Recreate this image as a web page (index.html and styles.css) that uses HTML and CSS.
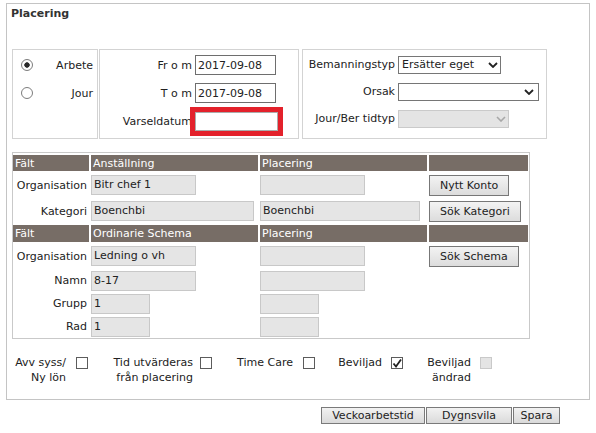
FILE: index.html
```html
<!DOCTYPE html>
<html lang="sv">
<head>
<meta charset="utf-8">
<title>Placering</title>
<link rel="stylesheet" href="styles.css">
</head>
<body>
<div class="panel">
  <div class="title">Placering</div>
  <div class="top-row">
    <div class="box box-type">
      <div class="radio-row"><span class="radio checked"></span><span class="lbl">Arbete</span></div>
      <div class="radio-row"><span class="radio"></span><span class="lbl">Jour</span></div>
    </div>
    <div class="box box-dates">
      <span class="lbl">Fr o m</span><input class="date" type="text" value="2017-09-08" readonly>
      <span class="lbl">T o m</span><input class="date" type="text" value="2017-09-08" readonly>
      <span class="lbl">Varseldatum</span><span class="highlight"><input class="date date-blank" type="text" value="" readonly></span>
    </div>
    <div class="box box-sel">
      <span class="lbl">Bemanningstyp</span>
      <div class="select sel-bem"><span>Ersätter eget</span><svg class="chev" width="10" height="6" viewBox="0 0 10 6"><polyline points="1,1 5,5 9,1" fill="none" stroke="#222" stroke-width="1.8"/></svg></div>
      <span class="lbl">Orsak</span>
      <div class="select sel-ors"><span></span><svg class="chev" width="10" height="6" viewBox="0 0 10 6"><polyline points="1,1 5,5 9,1" fill="none" stroke="#222" stroke-width="1.8"/></svg></div>
      <span class="lbl">Jour/Ber tidtyp</span>
      <div class="select sel-jour disabled"><span></span><svg class="chev" width="10" height="6" viewBox="0 0 10 6"><polyline points="1,1 5,5 9,1" fill="none" stroke="#a8a8a8" stroke-width="1.6"/></svg></div>
    </div>
  </div>

  <div class="fields">
    <div class="th">Fält</div><div class="th">Anställning</div><div class="th">Placering</div><div class="th"></div>

    <div class="fl">Organisation</div>
    <div class="fc"><span class="ro w-md">Bitr chef 1</span></div>
    <div class="fc"><span class="ro w-md"></span></div>
    <div class="fc"><button class="btn" type="button">Nytt Konto</button></div>

    <div class="fl">Kategori</div>
    <div class="fc"><span class="ro w-lg">Boenchbi</span></div>
    <div class="fc"><span class="ro w-lg2">Boenchbi</span></div>
    <div class="fc"><button class="btn" type="button">Sök Kategori</button></div>

    <div class="th">Fält</div><div class="th">Ordinarie Schema</div><div class="th">Placering</div><div class="th"></div>

    <div class="fl">Organisation</div>
    <div class="fc"><span class="ro w-md">Ledning o vh</span></div>
    <div class="fc"><span class="ro w-md"></span></div>
    <div class="fc"><button class="btn" type="button">Sök Schema</button></div>

    <div class="fl">Namn</div>
    <div class="fc"><span class="ro w-md">8-17</span></div>
    <div class="fc"><span class="ro w-md"></span></div>
    <div class="fc"></div>

    <div class="fl">Grupp</div>
    <div class="fc"><span class="ro w-sm">1</span></div>
    <div class="fc"><span class="ro w-sm"></span></div>
    <div class="fc"></div>

    <div class="fl">Rad</div>
    <div class="fc"><span class="ro w-sm">1</span></div>
    <div class="fc"><span class="ro w-sm"></span></div>
    <div class="fc"></div>
  </div>

  <div class="checks">
    <div class="ck ck1"><span class="ck-lbl">Avv syss/<br>Ny lön</span><span class="cb"></span></div>
    <div class="ck ck2"><span class="ck-lbl">Tid utvärderas<br>från placering</span><span class="cb"></span></div>
    <div class="ck ck3"><span class="ck-lbl">Time Care</span><span class="cb"></span></div>
    <div class="ck ck4"><span class="ck-lbl">Beviljad</span><span class="cb checked"><svg width="10" height="10" viewBox="0 0 10 10"><polyline points="1.5,5.5 4,8.5 9,1.5" fill="none" stroke="#222" stroke-width="1.8"/></svg></span></div>
    <div class="ck ck5"><span class="ck-lbl">Beviljad<br>ändrad</span><span class="cb disabled"></span></div>
  </div>
</div>

<div class="actions">
  <button class="abtn a-vecko" type="button">Veckoarbetstid</button>
  <button class="abtn a-dygn" type="button">Dygnsvila</button>
  <button class="abtn a-spara" type="button">Spara</button>
</div>
</body>
</html>
```

FILE: styles.css
```css
* { box-sizing: border-box; }

body {
  margin: 0;
  background: #fff;
  color: #222;
  font-family: "DejaVu Sans", Verdana, sans-serif;
  font-size: 11px;
}

.panel {
  margin: 3px 0 0 6px;
  width: 584px;
  height: 397px;
  border: 1px solid #c4c4c4;
}

.title {
  font-weight: bold;
  line-height: 13px;
  padding: 3px 0 0 4px;
  color: #333;
}

/* top row of boxes */
.top-row {
  display: flex;
  margin: 29px 0 0 5px;
}

.box {
  border: 1px solid #d3d3d3;
  height: 90px;
  padding-top: 1px;
}

.lbl { text-align: right; white-space: nowrap; }

.box-type {
  width: 86px;
  display: grid;
  grid-auto-rows: 28px;
  align-content: start;
}

.radio-row {
  display: flex;
  align-items: center;
  justify-content: space-between;
  padding: 0 4px 0 8px;
}

.radio {
  width: 12px;
  height: 12px;
  border: 1px solid #7d7d7d;
  border-radius: 50%;
  background: #fff;
}

.radio.checked {
  background: radial-gradient(circle, #2a2a2a 0 2.4px, #fff 3px);
}

.box-dates {
  width: 200px;
  margin-left: 1px;
  display: grid;
  grid-template-columns: 92px 81px;
  column-gap: 3px;
  grid-auto-rows: 28px;
  align-items: center;
  align-content: start;
}

.date {
  width: 81px;
  height: 20px;
  margin: 0;
  padding: 0 0 0 2px;
  border: 1px solid #6e6e6e;
  background: #fff;
  color: #222;
  font: inherit;
  outline: none;
}

.highlight {
  justify-self: start;
  display: inline-flex;
  margin-left: -5px;
  border: 5px solid #e3212b;
}

.date-blank {
  width: 83px;
  height: 19px;
  border-color: #ababab;
}

.box-sel {
  width: 245px;
  margin-left: 3px;
  display: grid;
  grid-template-columns: 92px auto;
  column-gap: 3px;
  grid-auto-rows: 27px;
  align-items: center;
  align-content: start;
  justify-items: start;
}

.box-sel .lbl { justify-self: end; }

.select {
  display: flex;
  align-items: center;
  justify-content: space-between;
  height: 18px;
  border: 1px solid #767676;
  background: #fff;
  padding: 0 2px 0 3px;
  white-space: nowrap;
}

.sel-bem { width: 103px; }
.sel-ors { width: 141px; padding-right: 4px; }
.sel-jour { width: 111px; }

.select.disabled {
  background: #e4e4e4;
  border-color: #cacaca;
}

.chev { flex: none; }

/* fields table */
.fields {
  margin: 13px 0 0 5px;
  width: 518px;
  border: 1px solid #c9c9c9;
  padding: 2px 1px 1px 0;
  display: grid;
  grid-template-columns: 76px 167px 167px 99px;
  grid-template-rows: 16px 24px 24px 17px 24px 21px 21px 21px;
  column-gap: 2px;
  row-gap: 2px;
}

.th {
  background: #776d66;
  color: #fff;
  padding-left: 2px;
  display: flex;
  align-items: center;
  white-space: nowrap;
}

.fl {
  display: flex;
  align-items: center;
  justify-content: flex-end;
  padding-right: 2px;
  white-space: nowrap;
}

.fc {
  display: flex;
  align-items: center;
}

.ro {
  display: block;
  height: 20px;
  line-height: 18px;
  background: #e5e5e5;
  border: 1px solid #c8c8c8;
  padding-left: 2px;
  white-space: nowrap;
  overflow: hidden;
}

.w-md { width: 105px; }
.w-lg { width: 163px; }
.w-lg2 { width: 160px; }
.w-sm { width: 59px; }

.btn {
  height: 21px;
  margin: 0;
  padding: 0 10px;
  font: inherit;
  color: #222;
  border: 1px solid #777;
  border-radius: 0;
  background: linear-gradient(#f3f3f3, #dcdcdc);
  white-space: nowrap;
}

/* checkbox row */
.checks {
  display: flex;
  margin: 16px 0 0 6px;
  line-height: 15px;
}

.ck {
  display: flex;
  align-items: flex-start;
  margin-right: 23px;
}

.ck-lbl {
  text-align: right;
  white-space: nowrap;
}

.cb {
  flex: none;
  width: 12px;
  height: 12px;
  margin-top: 2px;
  border: 1px solid #5c5c5c;
  background: #fff;
  display: flex;
  align-items: center;
  justify-content: center;
}

.cb.disabled {
  background: #e4e4e4;
  border-color: #c9c9c9;
}

.ck1 .ck-lbl { width: 53px; }
.ck1 .cb { margin-left: 10px; }
.ck2 { margin-right: 24px; }
.ck2 .ck-lbl { width: 82px; }
.ck2 .cb { margin-left: 7px; }
.ck3 .ck-lbl { width: 57px; }
.ck3 .cb { margin-left: 10px; }
.ck4 .ck-lbl { width: 44px; }
.ck4 .cb { margin-left: 9px; }
.ck5 .ck-lbl { width: 45px; }
.ck5 .cb { margin-left: 9px; }

/* bottom buttons */
.actions {
  display: flex;
  justify-content: flex-end;
  gap: 1px;
  margin-top: 7px;
  padding-right: 36px;
}

.abtn {
  height: 17px;
  margin: 0;
  padding: 0;
  font: inherit;
  color: #222;
  border: 1px solid #7a7a7a;
  border-radius: 0;
  background: linear-gradient(#f2f2f2, #dadada);
  text-align: center;
  white-space: nowrap;
}

.a-vecko { width: 104px; }
.a-dygn { width: 86px; }
.a-spara { width: 47px; }
```
